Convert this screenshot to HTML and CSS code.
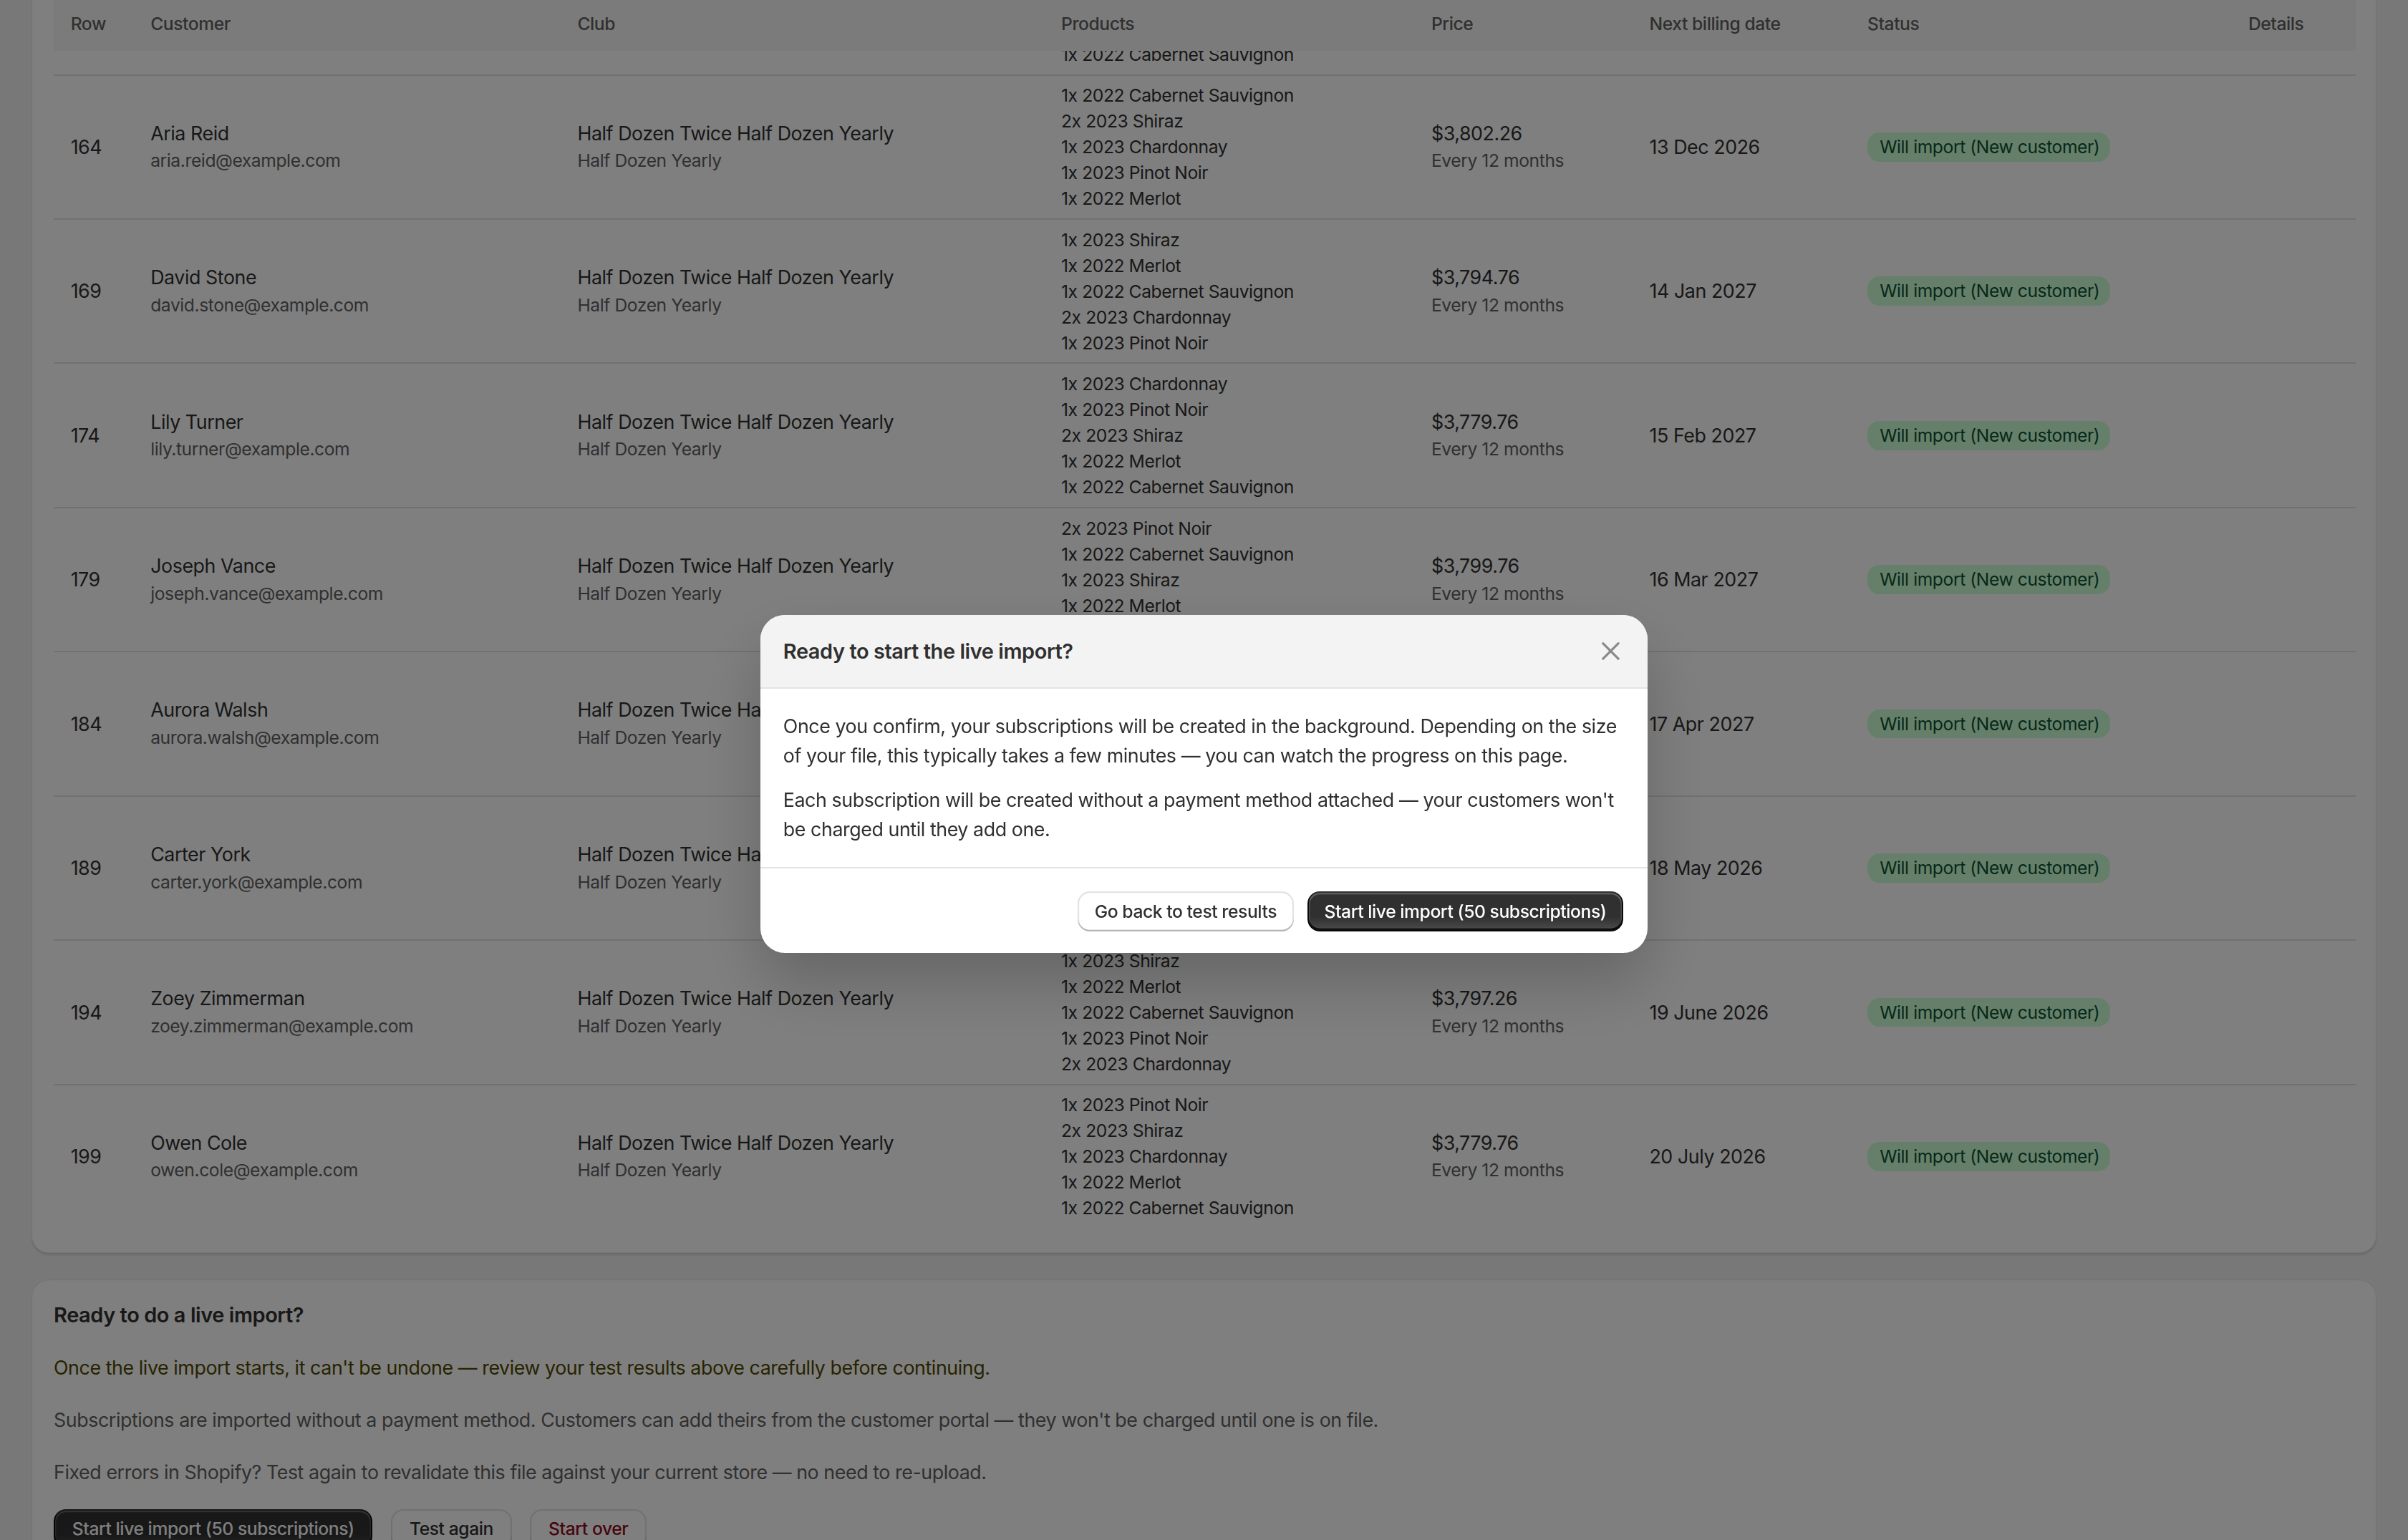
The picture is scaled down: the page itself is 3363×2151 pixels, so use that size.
FILE: index.html
```html
<!DOCTYPE html>
<html lang="en">
<head>
  <meta charset="UTF-8" />
  <meta name="viewport" content="width=device-width, initial-scale=1.0"/>
  <title>Import subscriptions – Test results</title>
  <link rel="stylesheet" href="styles.css">
</head>
<body>
  <div class="page" id="page">
    <div class="content">
      <div class="card results">
        <h2 class="card-title">Test results</h2>
        <table class="results-table">
          <colgroup>
            <col style="width:52px"><col style="width:278px"><col style="width:315px"><col style="width:241px">
            <col style="width:142px"><col style="width:142px"><col style="width:248px"><col style="width:81px">
          </colgroup>
          <thead>
            <tr>
              <th>Row</th><th>Customer</th><th>Club</th><th>Products</th>
              <th>Price</th><th>Next billing date</th><th>Status</th><th>Details</th>
            </tr>
          </thead>
          <tbody id="rows"></tbody>
        </table>
      </div>

      <div class="card live">
        <h2 class="card-title">Ready to do a live import?</h2>
        <p class="warning">Once the live import starts, it can't be undone — review your test results above carefully before continuing.</p>
        <p class="muted">Subscriptions are imported without a payment method. Customers can add theirs from the customer portal — they won't be charged until one is on file.</p>
        <p class="muted">Fixed errors in Shopify? Test again to revalidate this file against your current store — no need to re-upload.</p>
        <div class="actions">
          <button class="btn btn-primary">Start live import (50 subscriptions)</button>
          <button class="btn">Test again</button>
          <button class="btn btn-critical">Start over</button>
        </div>
      </div>
    </div>
  </div>

  <div class="backdrop">
    <div class="modal" role="dialog">
      <div class="modal-header">
        <h3>Ready to start the live import?</h3>
        <button class="close" title="Close">
          <svg viewBox="0 0 20 20" width="20" height="20"><path d="M5 5l10 10M15 5L5 15" stroke="currentColor" stroke-width="1.5" stroke-linecap="round" fill="none"/></svg>
        </button>
      </div>
      <div class="modal-body">
        <p>Once you confirm, your subscriptions will be created in the background. Depending on the size of your file, this typically takes a few minutes — you can watch the progress on this page.</p>
        <p>Each subscription will be created without a payment method attached — your customers won't be charged until they add one.</p>
      </div>
      <div class="modal-footer">
        <button class="btn">Go back to test results</button>
        <button class="btn btn-primary">Start live import (50 subscriptions)</button>
      </div>
    </div>
  </div>

  <script>
    const rows = [
      { row: 154, name: "Mia Foster", email: "mia.foster@example.com", price: "$3,782.26", date: "11 Oct 2026",
        products: ["1x 2023 Shiraz", "1x 2023 Pinot Noir", "2x 2023 Chardonnay", "1x 2022 Merlot", "1x 2022 Cabernet Sauvignon"] },
      { row: 159, name: "Noah Hughes", email: "noah.hughes@example.com", price: "$3,794.76", date: "12 Nov 2026",
        products: ["1x 2023 Pinot Noir", "1x 2022 Merlot", "2x 2023 Shiraz", "1x 2023 Chardonnay", "1x 2022 Cabernet Sauvignon"] },
      { row: 164, name: "Aria Reid", email: "aria.reid@example.com", price: "$3,802.26", date: "13 Dec 2026",
        products: ["1x 2022 Cabernet Sauvignon", "2x 2023 Shiraz", "1x 2023 Chardonnay", "1x 2023 Pinot Noir", "1x 2022 Merlot"] },
      { row: 169, name: "David Stone", email: "david.stone@example.com", price: "$3,794.76", date: "14 Jan 2027",
        products: ["1x 2023 Shiraz", "1x 2022 Merlot", "1x 2022 Cabernet Sauvignon", "2x 2023 Chardonnay", "1x 2023 Pinot Noir"] },
      { row: 174, name: "Lily Turner", email: "lily.turner@example.com", price: "$3,779.76", date: "15 Feb 2027",
        products: ["1x 2023 Chardonnay", "1x 2023 Pinot Noir", "2x 2023 Shiraz", "1x 2022 Merlot", "1x 2022 Cabernet Sauvignon"] },
      { row: 179, name: "Joseph Vance", email: "joseph.vance@example.com", price: "$3,799.76", date: "16 Mar 2027",
        products: ["2x 2023 Pinot Noir", "1x 2022 Cabernet Sauvignon", "1x 2023 Shiraz", "1x 2022 Merlot", "1x 2023 Chardonnay"] },
      { row: 184, name: "Aurora Walsh", email: "aurora.walsh@example.com", price: "$3,782.26", date: "17 Apr 2027",
        products: ["1x 2022 Merlot", "2x 2023 Chardonnay", "1x 2023 Shiraz", "1x 2022 Cabernet Sauvignon", "1x 2023 Pinot Noir"] },
      { row: 189, name: "Carter York", email: "carter.york@example.com", price: "$3,794.76", date: "18 May 2026",
        products: ["1x 2023 Pinot Noir", "1x 2022 Cabernet Sauvignon", "1x 2022 Merlot", "2x 2023 Shiraz", "1x 2023 Chardonnay"] },
      { row: 194, name: "Zoey Zimmerman", email: "zoey.zimmerman@example.com", price: "$3,797.26", date: "19 June 2026",
        products: ["1x 2023 Shiraz", "1x 2022 Merlot", "1x 2022 Cabernet Sauvignon", "1x 2023 Pinot Noir", "2x 2023 Chardonnay"] },
      { row: 199, name: "Owen Cole", email: "owen.cole@example.com", price: "$3,779.76", date: "20 July 2026",
        products: ["1x 2023 Pinot Noir", "2x 2023 Shiraz", "1x 2023 Chardonnay", "1x 2022 Merlot", "1x 2022 Cabernet Sauvignon"] }
    ];

    function renderRows() {
      const tbody = document.getElementById("rows");
      rows.forEach(r => {
        const tr = document.createElement("tr");
        tr.id = "row-" + r.row;
        tr.innerHTML = `
          <td>${r.row}</td>
          <td><div class="primary">${r.name}</div><div class="secondary">${r.email}</div></td>
          <td><div class="primary">Half Dozen Twice Half Dozen Yearly</div><div class="secondary">Half Dozen Yearly</div></td>
          <td class="products">${r.products.map(p => `<div>${p}</div>`).join("")}</td>
          <td><div class="primary">${r.price}</div><div class="secondary">Every 12 months</div></td>
          <td>${r.date}</td>
          <td><span class="badge">Will import (New customer)</span></td>
          <td></td>`;
        tbody.appendChild(tr);
      });
    }

    renderRows();
    // the page is scrolled down to the end of the results table
    document.getElementById("row-164").scrollIntoView({ block: "start" });
  </script>
</body>
</html>
```

FILE: styles.css
```css
html {
  zoom: 2.1448;
  height: 100%;
}

body {
  margin: 0;
  height: 100%;
  overflow: hidden;
  font-family: Inter, "Noto Sans", sans-serif;
  font-feature-settings: "calt" 0;
  font-size: 12.5px;
  letter-spacing: -0.2px;
  color: #303030;
  background: #f1f1f1;
}

.page {
  height: 100%;
  overflow-y: auto;
  scrollbar-width: none;
}

.content {
  padding: 20px;
  display: flex;
  flex-direction: column;
  gap: 16px;
}

.card {
  background: #fff;
  border-radius: 12px;
  padding: 15px 15px 17px;
  box-shadow: 0 1px 0 0 rgba(26, 26, 26, 0.07), inset 0 -1px 0 0 #d4d4d4, inset 0 0 0 1px #ebebeb;
}

.card-title {
  margin: 0;
  font-size: 13.5px;
  line-height: 20px;
  font-weight: 600;
}

/* results table */
.results-table {
  width: 100%;
  margin-top: 14px;
  border-collapse: collapse;
  table-layout: fixed;
}

.results-table th {
  position: sticky;
  top: 0;
  z-index: 1;
  background: #f7f7f7;
  color: #616161;
  font-size: 11.5px;
  font-weight: 500;
  line-height: 17px;
  text-align: left;
  padding: 7px 11px 9px;
  white-space: nowrap;
}

.results-table tr {
  scroll-margin-top: 49px;
}

.results-table td {
  padding: 4.5px 11px;
  border-top: 1px solid #e3e3e3;
  vertical-align: middle;
  line-height: 18px;
  white-space: nowrap;
}

.results-table thead + tbody tr:first-child td {
  border-top: none;
}

.results-table .secondary {
  font-size: 11.5px;
  color: #616161;
}

.results-table .products {
  font-size: 11.5px;
  line-height: 16.8px;
}

.badge {
  display: inline-block;
  padding: 0 7px 0 8px;
  border-radius: 8px;
  background: #cdfed4;
  color: #0c5132;
  font-size: 11.5px;
  line-height: 19px;
}

/* live import card */
.live {
  display: flex;
  flex-direction: column;
  gap: 14px;
  padding: 14px 15px 16px;
}

.live p {
  margin: 0;
  line-height: 20px;
}

.warning {
  color: #4f4700;
}

.muted {
  color: #616161;
}

.actions {
  display: flex;
  gap: 12px;
}

.actions .btn {
  padding: 0 12px;
}

/* buttons */
.btn {
  height: 26px;
  padding: 0 11px;
  border: none;
  border-radius: 8px;
  background: #fff;
  color: #303030;
  font-family: inherit;
  font-feature-settings: inherit;
  letter-spacing: inherit;
  font-size: 11.5px;
  font-weight: 500;
  cursor: pointer;
  box-shadow: inset 0 -1px 0 0 #b5b5b5, inset 0 0 0 1px #e3e3e3;
}

.btn-primary {
  background: linear-gradient(180deg, rgba(48, 48, 48, 0) 63%, rgba(255, 255, 255, 0.15) 100%), #303030;
  color: #fff;
  box-shadow: inset 0 -1px 0 1px rgba(0, 0, 0, 0.8), inset 0 0 0 1px #303030, inset 0 0.5px 0 1.5px rgba(255, 255, 255, 0.25);
}

.btn-critical {
  color: #8e0b21;
}

/* modal */
.backdrop {
  position: fixed;
  inset: 0;
  z-index: 10;
  background: rgba(0, 0, 0, 0.5);
  display: flex;
  align-items: center;
  justify-content: center;
  padding-top: 18px;
}

.modal {
  width: 578px;
  background: #fff;
  border-radius: 16px;
  overflow: hidden;
  box-shadow: 0 20px 40px rgba(0, 0, 0, 0.2);
}

.modal-header {
  height: 48px;
  box-sizing: border-box;
  padding: 0 14px 0 15px;
  background: #f3f3f3;
  border-bottom: 1px solid #e3e3e3;
  display: flex;
  align-items: center;
  justify-content: space-between;
}

.modal-header h3 {
  margin: 0;
  font-size: 13.5px;
  font-weight: 600;
}

.close {
  border: none;
  background: none;
  padding: 0;
  color: #8a8a8a;
  display: flex;
  cursor: pointer;
}

.modal-body {
  padding: 15px;
  display: flex;
  flex-direction: column;
  gap: 10px;
}

.modal-body p {
  margin: 0;
  line-height: 19px;
}

.modal-footer {
  border-top: 1px solid #e3e3e3;
  padding: 15px 16px 14px;
  display: flex;
  justify-content: flex-end;
  gap: 9px;
}
```
